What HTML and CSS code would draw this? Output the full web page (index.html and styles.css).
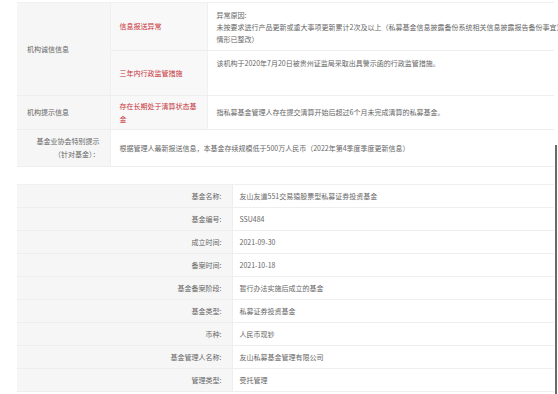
FILE: index.html
```
<!DOCTYPE html>
<html lang="zh-CN">
<head>
<meta charset="utf-8">
<title>基金信息</title>
<link rel="stylesheet" href="styles.css">
</head>
<body>
<div class="page">
  <table class="info">
    <colgroup>
      <col class="c1"><col class="c2"><col class="c3">
    </colgroup>
    <tr class="r1">
      <td class="lab" rowspan="2">机构诚信信息</td>
      <td class="red">信息报送异常</td>
      <td class="val top lh12">异常原因:<br><span class="nowrap">未按要求进行产品更新或重大事项更新累计2次及以上（私募基金信息披露备份系统相关信息披露报告备份事宜）</span><br>情形已整改）</td>
    </tr>
    <tr class="r2">
      <td class="red">三年内行政监管措施</td>
      <td class="val top">该机构于2020年7月20日被贵州证监局采取出具警示函的行政监管措施。</td>
    </tr>
    <tr class="r3">
      <td class="lab">机构提示信息</td>
      <td class="red">存在长期处于清算状态基金</td>
      <td class="val">指私募基金管理人存在提交清算开始后超过6个月未完成清算的私募基金。</td>
    </tr>
    <tr class="r4">
      <td class="lab right">基金业协会特别提示<br>（针对基金）：</td>
      <td class="val wide" colspan="2">根据管理人最新报送信息，本基金存续规模低于500万人民币（2022年第4季度季度更新信息）</td>
    </tr>
  </table>

  <table class="fund">
    <colgroup>
      <col class="k"><col class="v">
    </colgroup>
    <tr><td class="key">基金名称:</td><td class="value">友山友道551交易猿股票型私募证券投资基金</td></tr>
    <tr><td class="key">基金编号:</td><td class="value">SSU484</td></tr>
    <tr><td class="key">成立时间:</td><td class="value">2021-09-30</td></tr>
    <tr><td class="key">备案时间:</td><td class="value">2021-10-18</td></tr>
    <tr><td class="key">基金备案阶段:</td><td class="value">暂行办法实施后成立的基金</td></tr>
    <tr><td class="key">基金类型:</td><td class="value">私募证券投资基金</td></tr>
    <tr><td class="key">币种:</td><td class="value">人民币现钞</td></tr>
    <tr><td class="key">基金管理人名称:</td><td class="value">友山私募基金管理有限公司</td></tr>
    <tr><td class="key">管理类型:</td><td class="value">受托管理</td></tr>
  </table>
  <div class="edge"></div>
</div>
</body>
</html>
```

FILE: styles.css
```
html, body {
  margin: 0;
  padding: 0;
  background: #ffffff;
  overflow: hidden;
}
body {
  width: 558px;
  height: 394px;
  font-family: "Noto Sans CJK SC", "Noto Sans", sans-serif;
  font-size: 7px;
  color: #666666;
}
.page {
  position: relative;
  padding: 2px 0 0 17px;
}
table {
  border-collapse: collapse;
  table-layout: fixed;
}
td {
  padding: 0;
  line-height: 13px;
}
.info {
  width: 537px;
  border-top: 1px solid #f0f0f0;
}
.info col.c1 { width: 93px; }
.info col.c2 { width: 97px; }
.info col.c3 { width: 347px; }
.info td {
  border-bottom: 1px solid #eeeeee;
  vertical-align: middle;
}
.info .lab {
  background: #f6f6f6;
  padding: 0 10px;
  border-right: 1px solid #f0f0f0;
}
.info .lab.right {
  text-align: right;
  padding-right: 10px;
}
.info .red {
  background: #f8f8f8;
  color: #c7343b;
  padding: 0 7px 0 9px;
}
.info .val {
  background: #ffffff;
  padding: 0 9px;
  border-left: 1px solid #f0f0f0;
}
.info .val.top {
  vertical-align: top;
  padding-top: 6px;
}
.info .val.lh12 { line-height: 12px; }
.info .val.wide { padding-left: 9px; }
.nowrap { white-space: nowrap; }
.info tr.r1 td { height: 47px; }
.info tr.r2 td { height: 44px; }
.info tr.r3 td { height: 33px; }
.info tr.r4 td { height: 36px; }
.info tr.r1 td.val, .info tr.r2 td.val { height: auto; }

.fund {
  width: 537px;
  margin-top: 17px;
  border-top: 1px solid #f0f0f0;
}
.fund col.k { width: 215px; }
.fund td {
  height: 22px;
  border-bottom: 1px solid #eeeeee;
  vertical-align: middle;
}
.fund .key {
  background: #f6f6f6;
  text-align: right;
  padding-right: 10px;
  border-right: 1px solid #eeeeee;
}
.fund .value {
  background: #ffffff;
  padding-left: 7px;
}
.edge {
  position: absolute;
  left: 555px;
  top: 145px;
  width: 2px;
  height: 260px;
  background: #6a6a6a;
}
```
